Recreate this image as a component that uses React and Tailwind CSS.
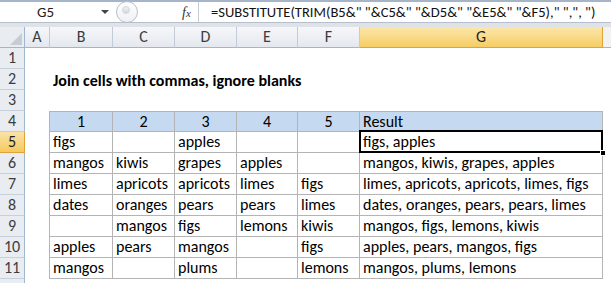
import React from "react";

const cols = [
  { k: "A", w: 25 },
  { k: "B", w: 63 },
  { k: "C", w: 62 },
  { k: "D", w: 62 },
  { k: "E", w: 61 },
  { k: "F", w: 62 },
  { k: "G", w: 243 },
];

const data = [
  ["figs", "", "apples", "", "", "figs, apples"],
  ["mangos", "kiwis", "grapes", "apples", "", "mangos, kiwis, grapes, apples"],
  ["limes", "apricots", "apricots", "limes", "figs", "limes, apricots, apricots, limes, figs"],
  ["dates", "oranges", "pears", "pears", "limes", "dates, oranges, pears, pears, limes"],
  ["", "mangos", "figs", "lemons", "kiwis", "mangos, figs, lemons, kiwis"],
  ["apples", "pears", "mangos", "", "figs", "apples, pears, mangos, figs"],
  ["mangos", "", "plums", "", "lemons", "mangos, plums, lemons"],
];

const font = { fontFamily: "Calibri, Carlito, 'Open Sans', sans-serif" };

function RowHead({ n, active }) {
  return (
    <div
      className={
        "w-[25px] h-[21px] shrink-0 box-border border-r border-b flex items-center justify-center text-[16px] " +
        (active
          ? "bg-gradient-to-b from-[#f9e3a6] to-[#f5c95c] border-r-[#e2a23a] border-b-[#e2a23a] text-[#1f1f1f]"
          : "bg-[#e9ecf1] border-r-[#9eb6ce] border-b-[#c6cfdc] text-[#3c3c3c]")
      }
    >
      {n}
    </div>
  );
}

export default function App() {
  return (
    <div className="w-[611px] h-[283px] overflow-hidden bg-white text-black" style={font}>
      {/* formula bar */}
      <div className="h-[2px] bg-[#a6b4c7]" />
      <div className="h-[20px] flex bg-white">
        <div className="w-[116px] shrink-0 relative flex items-center text-[15px] text-[#222]">
          <span className="absolute left-[37px] top-[-1px]">G5</span>
          <svg className="absolute left-[101px] top-[8px]" width="8" height="5" viewBox="0 0 8 5">
            <polygon points="0,0 8,0 4,4" fill="#444" />
          </svg>
        </div>
        <div className="w-[82px] shrink-0 relative bg-white">
          <div className="absolute left-0 top-[-1px] w-[22px] h-[22px] rounded-full border border-[#b7c0cc] bg-gradient-to-b from-white to-[#eef0f3]" />
          <div className="absolute left-[6px] top-[4px] w-[8px] h-[8px] rounded-full bg-gradient-to-b from-[#f2f2f2] to-[#d3d6da] border border-[#d2d6dc]" />
          <span
            className="absolute left-[66px] top-[0px] text-[14px] italic text-[#333]"
            style={{ fontFamily: "'Liberation Serif', serif" }}
          >
            f<span className="text-[11px]">x</span>
          </span>
        </div>
        <div className="flex-1 border-l border-[#c5cbd3] pl-[12px] text-[14.6px] leading-[20px] whitespace-nowrap text-[#111]">
          =SUBSTITUTE(TRIM(B5&amp;" "&amp;C5&amp;" "&amp;D5&amp;" "&amp;E5&amp;" "&amp;F5)," ",", ")
        </div>
      </div>
      <div className="h-[5px] bg-[#dfe3e8] border-t border-[#b6bfcb]" />

      {/* column headers */}
      <div className="flex h-[21px]">
        <div className="w-[25px] h-[21px] shrink-0 box-border border-r border-b border-[#9eb6ce] bg-[#e9ecf1] relative">
          <svg className="absolute right-[2px] bottom-[2px]" width="12" height="12" viewBox="0 0 12 12">
            <polygon points="12,0 12,12 0,12" fill="#c6ccd4" />
          </svg>
        </div>
        {cols.map((c) => (
          <div
            key={c.k}
            style={{ width: c.w }}
            className={
              "h-[21px] shrink-0 box-border border-r border-b flex items-center justify-center text-[16px] " +
              (c.k === "G"
                ? "bg-gradient-to-b from-[#fbe7aa] to-[#f6cd63] border-r-[#e2a23a] border-b-[#e2a23a] text-[#1f1f1f]"
                : "bg-gradient-to-b from-[#f6f7f9] to-[#e4e8ee] border-r-[#c2cbd7] border-b-[#9eb6ce] text-[#3c3c3c]")
            }
          >
            {c.k}
          </div>
        ))}
        <div className="flex-1 bg-[#f2f2f2] border-b border-[#9eb6ce]" />
      </div>

      {/* rows 1-3 */}
      {[1, 2, 3].map((n) => (
        <div key={n} className="flex h-[21px]">
          <RowHead n={n} />
          <div className="flex-1 relative">
            {n === 2 && (
              <span className="absolute left-[28px] top-[0px] text-[16px] font-bold whitespace-nowrap">
                Join cells with commas, ignore blanks
              </span>
            )}
          </div>
        </div>
      ))}

      {/* row 4 header */}
      <div className="flex h-[21px]">
        <RowHead n={4} />
        <div className="w-[25px] shrink-0 border-r border-[#b4b4b4]" />
        {["1", "2", "3", "4", "5"].map((t, i) => (
          <div
            key={t}
            style={{ width: cols[i + 1].w }}
            className="shrink-0 box-border h-[21px] border-t border-r border-b border-[#b4b4b4] bg-[#c5d9f1] flex items-center justify-center text-[16px]"
          >
            {t}
          </div>
        ))}
        <div
          style={{ width: cols[6].w }}
          className="shrink-0 box-border h-[21px] border-t border-r border-b border-[#b4b4b4] bg-[#c5d9f1] flex items-center pl-[3px] text-[16px]"
        >
          Result
        </div>
      </div>

      {data.map((r, ri) => (
        <div key={ri} className="flex h-[21px]">
          <RowHead n={ri + 5} active={ri === 0} />
          <div className="w-[25px] shrink-0 border-r border-[#b4b4b4]" />
          {r.map((t, i) => (
            <div
              key={i}
              style={{ width: cols[i + 1].w }}
              className={
                "shrink-0 box-border h-[21px] border-r border-b border-[#b4b4b4] flex items-center pl-[3px] text-[16px] whitespace-nowrap overflow-visible relative " +
                (ri === 0 && i === 5 ? "z-10" : "")
              }
            >
              {t}
              {ri === 0 && i === 5 && (
                <>
                  <div className="absolute left-[-1px] top-[-2px] right-[-1px] bottom-[-1px] border-2 border-black pointer-events-none" />
                  <div className="absolute right-[-4px] bottom-[-4px] w-[6px] h-[6px] bg-black border border-white" />
                </>
              )}
            </div>
          ))}
        </div>
      ))}
      <div className="flex h-[21px]">
        <div className="w-[25px] h-[21px] shrink-0 box-border border-r border-[#9eb6ce] bg-[#e9ecf1]" />
      </div>
    </div>
  );
}
